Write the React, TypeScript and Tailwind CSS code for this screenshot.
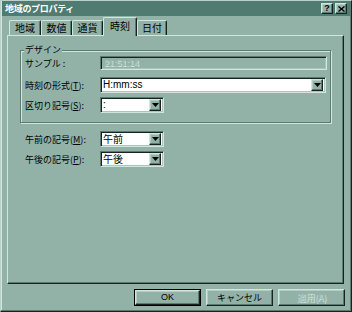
import React from "react";

const jp = { fontFamily: '"Noto Sans CJK JP", "Noto Sans", sans-serif' };

function Raised({ className = "", children }: { className?: string; children?: React.ReactNode }) {
  return (
    <div
      className={
        "border border-t-[#d2e6e0] border-l-[#d2e6e0] border-r-[#18221f] border-b-[#18221f] bg-[#92b2a8] shadow-[inset_-1px_-1px_0_#5b7b71,inset_1px_1px_0_#b2cdc5] " +
        className
      }
    >
      {children}
    </div>
  );
}

function Arrow() {
  return (
    <Raised className="w-[12px] h-[12px] flex items-center justify-center">
      <svg width="7" height="4" viewBox="0 0 7 4">
        <path d="M0 0h7L3.5 4z" fill="#000" />
      </svg>
    </Raised>
  );
}

function Combo({ w, text, latin }: { w: string; text: string; latin?: boolean }) {
  return (
    <div
      className={
        w +
        " h-[16px] bg-white border border-t-[#5b7b71] border-l-[#5b7b71] border-r-[#d2e6e0] border-b-[#d2e6e0] shadow-[inset_1px_1px_0_#18221f,inset_-1px_-1px_0_#a9c6bd] flex items-center pl-[2px] pr-[2px]"
      }
    >
      <span
        className="flex-1 text-[10px] leading-none text-black whitespace-nowrap"
        style={latin ? { fontFamily: '"Liberation Sans", Arial, sans-serif' } : jp}
      >
        {text}
      </span>
      <Arrow />
    </div>
  );
}

function Label({ children }: { children: React.ReactNode }) {
  return (
    <div className="w-[75px] shrink-0 text-[9px] leading-none text-black whitespace-nowrap" style={jp}>
      {children}
    </div>
  );
}

function Tab({ label, w, active }: { label: string; w: string; active?: boolean }) {
  return (
    <div
      className={
        w +
        (active
          ? " h-[19px] relative z-10 -mb-[1px] pb-[2px]"
          : " h-[15px]") +
        " bg-[#92b2a8] border-t border-l border-r border-t-[#d2e6e0] border-l-[#d2e6e0] border-r-[#18221f] rounded-t-[2px] shadow-[inset_-1px_0_0_#5b7b71] flex items-center justify-center text-[10px] leading-none text-black"
      }
      style={jp}
    >
      {label}
    </div>
  );
}

export default function App() {
  return (
    <div
      className="w-[352px] h-[312px] bg-[#92b2a8] border border-t-[#b8d2ca] border-l-[#b8d2ca] border-r-[#18221f] border-b-[#18221f] shadow-[inset_-1px_-1px_0_#5b7b71,inset_1px_1px_0_#d2e6e0] flex flex-col"
      style={jp}
    >
      {/* title bar */}
      <div className="h-[15px] mx-[1px] bg-[#4f7b71] flex items-center pl-[3px] pr-[3px]">
        <span className="flex-1 text-white font-bold text-[9px] leading-none tracking-[-0.3px]">地域のプロパティ</span>
        <Raised className="w-[12px] h-[11px] flex items-center justify-center text-[9px] font-bold leading-none text-black">
          <span style={{ fontFamily: '"Liberation Sans", Arial, sans-serif' }}>?</span>
        </Raised>
        <Raised className="w-[12px] h-[11px] ml-[2px] flex items-center justify-center">
          <svg width="7" height="6" viewBox="0 0 7 6">
            <path d="M0.5 0.5L6.5 5.5M6.5 0.5L0.5 5.5" stroke="#000" strokeWidth="1.4" />
          </svg>
        </Raised>
      </div>

      {/* tabs */}
      <div className="h-[18px] mt-[1px] ml-[8px] flex items-end">
        <Tab label="地域" w="w-[32px]" />
        <Tab label="数値" w="w-[31px]" />
        <Tab label="通貨" w="w-[31px]" />
        <Tab label="時刻" w="w-[34px]" active />
        <Tab label="日付" w="w-[30px]" />
      </div>

      {/* panel */}
      <div className="ml-[6px] w-[337px] h-[249px] border border-t-[#d2e6e0] border-l-[#d2e6e0] border-r-[#18221f] border-b-[#18221f] shadow-[inset_-1px_-1px_0_#5b7b71] pl-[12px] pt-[14px]">
        <div className="relative w-[311px] h-[73px] border border-[#5b7b71] shadow-[1px_1px_0_#d2e6e0,inset_1px_1px_0_#d2e6e0] pl-[4px] pt-[5px]">
          <div className="absolute -top-[6px] left-[3px] px-[1px] bg-[#92b2a8] text-[9px] leading-none text-black">デザイン</div>
          <div className="flex items-center h-[14px]">
            <Label>サンプル :</Label>
            <div className="w-[227px] h-[14px] border border-t-[#5b7b71] border-l-[#5b7b71] border-r-[#d2e6e0] border-b-[#d2e6e0] shadow-[inset_1px_1px_0_#18221f,inset_-1px_-1px_0_#a9c6bd] flex items-center pl-[3px]">
              <span
                className="text-[9px] leading-none text-[#a2bbb3] [text-shadow:1px_1px_0_#d2e6e0]"
                style={{ fontFamily: '"Liberation Sans", Arial, sans-serif' }}
              >
                21:51:14
              </span>
            </div>
          </div>
          <div className="flex items-center mt-[7px]">
            <Label>
              時刻の形式(<span className="underline">T</span>):
            </Label>
            <Combo w="w-[226px]" text="H:mm:ss" latin />
          </div>
          <div className="flex items-center mt-[4px]">
            <Label>
              区切り記号(<span className="underline">S</span>):
            </Label>
            <Combo w="w-[64px]" text=":" latin />
          </div>
        </div>

        <div className="flex items-center mt-[8px] pl-[5px]">
          <Label>
            午前の記号(<span className="underline">M</span>):
          </Label>
          <Combo w="w-[64px]" text="午前" />
        </div>
        <div className="flex items-center mt-[4px] pl-[5px]">
          <Label>
            午後の記号(<span className="underline">P</span>):
          </Label>
          <Combo w="w-[64px]" text="午後" />
        </div>
      </div>

      {/* buttons */}
      <div className="mt-[5px] flex justify-end gap-[5px] pr-[6px]">
        <div className="border border-black">
          <Raised className="w-[65px] h-[15px] flex items-center justify-center text-[9px] leading-none text-black">
            <span style={{ fontFamily: '"Liberation Sans", Arial, sans-serif' }}>OK</span>
          </Raised>
        </div>
        <Raised className="w-[67px] h-[17px] flex items-center justify-center text-[9px] leading-none text-black">
          キャンセル
        </Raised>
        <Raised className="w-[67px] h-[17px] flex items-center justify-center text-[9px] leading-none text-[#a2bbb3] [text-shadow:1px_1px_0_#d2e6e0]">
          適用(A)
        </Raised>
      </div>
    </div>
  );
}
